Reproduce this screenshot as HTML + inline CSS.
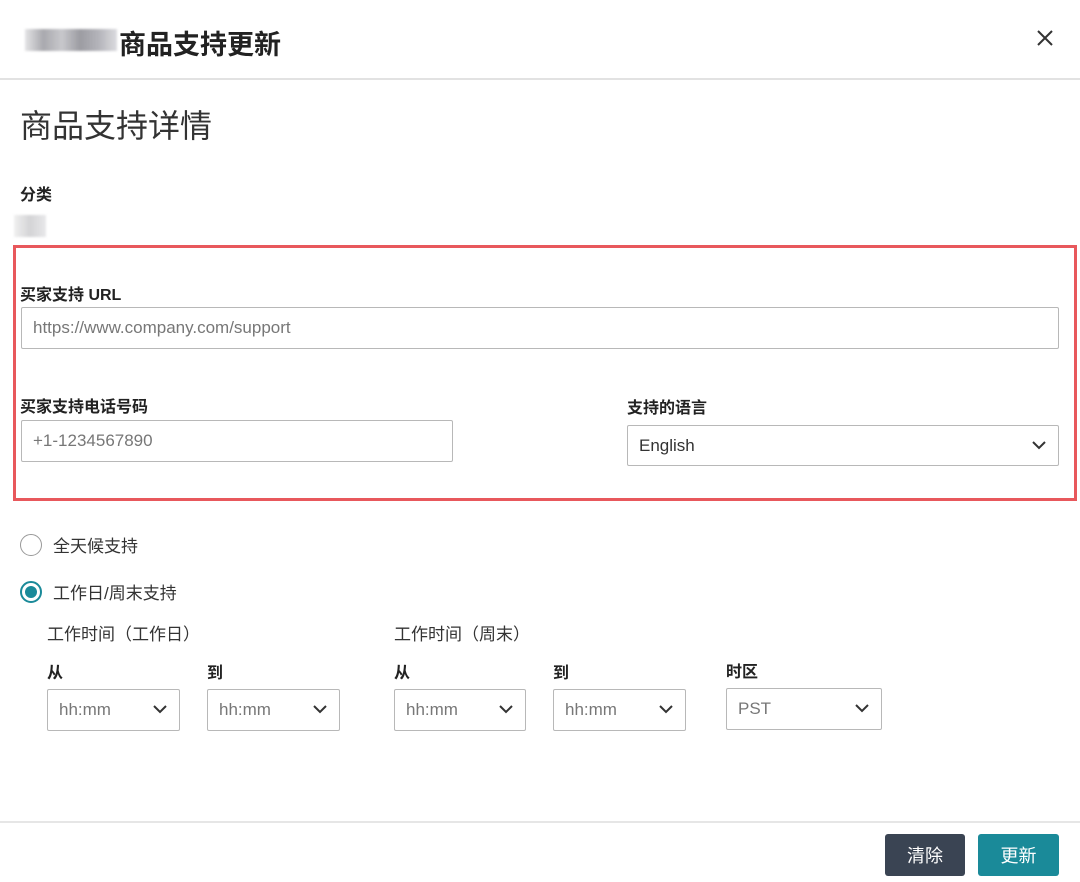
<!DOCTYPE html>
<html><head><meta charset="utf-8"><style>
*{box-sizing:border-box;margin:0;padding:0}
body{width:1080px;height:882px;background:#fff;position:relative;overflow:hidden;font-family:"Liberation Sans","Noto Sans CJK SC",sans-serif;color:#222}
.a{position:absolute;white-space:nowrap}
.lb{font-size:16px;font-weight:bold;color:#222}
.in{position:absolute;border:1px solid #b8b8b8;border-radius:2px;font-size:17px;color:#777;padding-left:11px;display:flex;align-items:center}
.sel svg{position:absolute;right:12px;top:50%;margin-top:-5px}
.btn{position:absolute;color:#fff;font-size:18px;display:flex;align-items:center;justify-content:center;border-radius:3px}
</style></head><body>
<div class="a" style="left:25px;top:29px;width:92px;height:22px;background:linear-gradient(90deg,#e4e4e6,#a9a9ae 20%,#c8c8cc 40%,#9c9ca2 60%,#b4b4ba 80%,#dcdce0);filter:blur(1px)"></div>
<div class="a" style="left:119px;top:23px;font-size:27px;font-weight:bold;color:#222">商品支持更新</div>
<svg class="a" style="left:1037px;top:30px" width="16" height="16"><path d="M1 1L15 15M15 1L1 15" stroke="#333" stroke-width="2"/></svg>
<div class="a" style="left:0;top:78px;width:1080px;height:2px;background:#e2e2e2"></div>
<div class="a" style="left:20px;top:101px;font-size:32px;color:#333">商品支持详情</div>
<div class="a lb" style="left:20px;top:181px">分类</div>
<div class="a" style="left:14px;top:215px;width:32px;height:22px;background:linear-gradient(90deg,#f0f0f0,#d4d4d6 50%,#e8e8ea);filter:blur(1px)"></div>
<div class="a" style="left:13px;top:245px;width:1064px;height:256px;border:3px solid #e8585c"></div>
<div class="a lb" style="left:20px;top:281px">买家支持 URL</div>
<div class="in" style="left:21px;top:307px;width:1038px;height:42px">https://www.company.com/support</div>
<div class="a lb" style="left:20px;top:393px">买家支持电话号码</div>
<div class="in" style="left:21px;top:420px;width:432px;height:42px">+1-1234567890</div>
<div class="a lb" style="left:627px;top:394px">支持的语言</div>
<div class="in sel" style="left:627px;top:425px;width:432px;height:41px;color:#333">English<svg width="14" height="9"><path d="M1 1L7 7L13 1" stroke="#333" stroke-width="2" fill="none"/></svg></div>
<div class="a" style="left:20px;top:534px;width:22px;height:22px;border:1px solid #999;border-radius:50%"></div>
<div class="a" style="left:53px;top:532px;font-size:17px;color:#333">全天候支持</div>
<div class="a" style="left:20px;top:581px;width:22px;height:22px;border:2px solid #1a8a99;border-radius:50%"><div style="position:absolute;left:3px;top:3px;width:12px;height:12px;border-radius:50%;background:#1a8a99"></div></div>
<div class="a" style="left:53px;top:579px;font-size:17px;color:#333">工作日/周末支持</div>
<div class="a" style="left:47px;top:620px;font-size:17px;color:#333">工作时间（工作日）</div>
<div class="a" style="left:394px;top:620px;font-size:17px;color:#333">工作时间（周末）</div>
<div class="a lb" style="left:47px;top:659px">从</div>
<div class="a lb" style="left:207px;top:659px">到</div>
<div class="a lb" style="left:394px;top:659px">从</div>
<div class="a lb" style="left:553px;top:659px">到</div>
<div class="a lb" style="left:726px;top:658px">时区</div>
<div class="in sel" style="left:47px;top:689px;width:133px;height:42px">hh:mm<svg width="14" height="9"><path d="M1 1L7 7L13 1" stroke="#333" stroke-width="2" fill="none"/></svg></div>
<div class="in sel" style="left:207px;top:689px;width:133px;height:42px">hh:mm<svg width="14" height="9"><path d="M1 1L7 7L13 1" stroke="#333" stroke-width="2" fill="none"/></svg></div>
<div class="in sel" style="left:394px;top:689px;width:132px;height:42px">hh:mm<svg width="14" height="9"><path d="M1 1L7 7L13 1" stroke="#333" stroke-width="2" fill="none"/></svg></div>
<div class="in sel" style="left:553px;top:689px;width:133px;height:42px">hh:mm<svg width="14" height="9"><path d="M1 1L7 7L13 1" stroke="#333" stroke-width="2" fill="none"/></svg></div>
<div class="in sel" style="left:726px;top:688px;width:156px;height:42px">PST<svg width="14" height="9"><path d="M1 1L7 7L13 1" stroke="#333" stroke-width="2" fill="none"/></svg></div>
<div class="a" style="left:0;top:821px;width:1080px;height:2px;background:#e6e6e6"></div>
<div class="btn" style="left:885px;top:834px;width:80px;height:42px;background:#3a4453">清除</div>
<div class="btn" style="left:978px;top:834px;width:81px;height:42px;background:#1a8a99">更新</div>
</body></html>
